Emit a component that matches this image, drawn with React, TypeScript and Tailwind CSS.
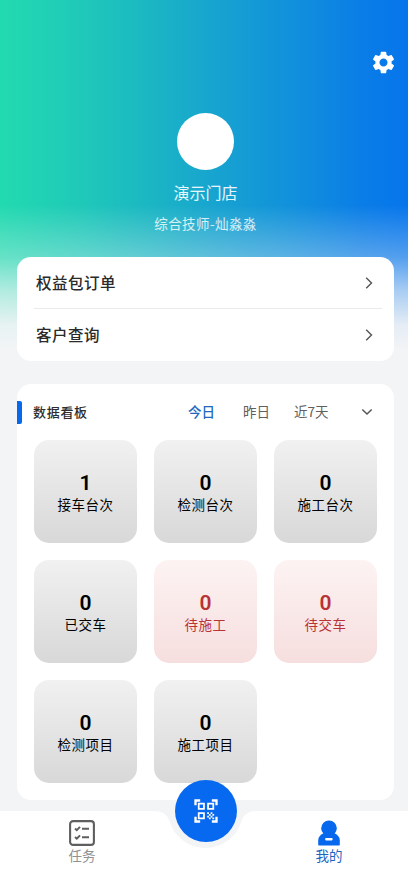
import { MdSettings, MdQrCodeScanner } from 'react-icons/md';

const menu = ['权益包订单', '客户查询'];

const stats = [
  { label: '接车台次', value: 1 },
  { label: '检测台次', value: 0 },
  { label: '施工台次', value: 0 },
  { label: '已交车', value: 0 },
  { label: '待施工', value: 0, warn: true },
  { label: '待交车', value: 0, warn: true },
  { label: '检测项目', value: 0 },
  { label: '施工项目', value: 0 },
];

function ChevronRight() {
  return (
    <svg width="8" height="12" viewBox="0 0 8 12" fill="none" stroke="#555" strokeWidth="1.4">
      <path d="M1.2 0.8 6.5 6 1.2 11.2" />
    </svg>
  );
}

function TaskIcon() {
  return (
    <svg width="26" height="26" viewBox="0 0 26 26" fill="none" stroke="#5f5f5f">
      <rect x="1.1" y="1.1" width="23.8" height="23.8" rx="3" strokeWidth="2.1" />
      <path d="M6 8.5l1.8 1.7 3.2-3.3M6 17l1.8 1.7 3.2-3.3M13 8.7h7M13 17.3h7" strokeWidth="2" />
    </svg>
  );
}

function UserIcon() {
  return (
    <svg width="22" height="26" viewBox="0 0 22 26" fill="#0768ed">
      <circle cx="11" cy="8.3" r="7.8" />
      <path d="M5.5 13.2h11c3.200 1.500 5.300 3.800 5.300 7.200v4.100c0 .7-.4 1-1 1H1.200c-.6 0-1-.3-1-1v-4.100c0-3.400 2.100-5.700 5.300-7.200z" />
      <rect x="7.2" y="18" width="7.4" height="2.4" rx="0.8" fill="#fff" />
    </svg>
  );
}

export default function App() {
  return (
    <div className="relative flex h-[883px] w-[408px] flex-col overflow-hidden bg-[#f3f4f6] font-['Noto_Sans_CJK_SC',sans-serif]">
      <div className="absolute inset-x-0 top-0 h-[360px] bg-[linear-gradient(90deg,#22dab0_0%,#1fc9b9_20%,#1bb7c3_36%,#17a3d0_53%,#1190dc_72%,#0a7de7_89%,#0675ec_100%)]">
        <div className="h-full bg-[linear-gradient(180deg,rgba(243,244,246,0)_205px,rgba(243,244,246,0.32)_257px,rgba(243,244,246,0.68)_290px,rgba(243,244,246,0.94)_325px,#f3f4f6_350px)]" />
      </div>

      <header className="relative flex h-[257px] flex-col items-center pl-[3px] text-white">
        <div className="mt-[49px] flex w-full justify-end pr-[11px]">
          <MdSettings size={27} />
        </div>
        <div className="mt-[37px] size-[57px] shrink-0 rounded-full bg-white" />
        <div className="mt-[11px] text-[16px] leading-[22px] text-white/90">演示门店</div>
        <div className="mt-[10px] text-[13.5px] leading-[20px] tracking-[0.4px] text-white/80">综合技师-灿淼淼</div>
      </header>

      <section className="relative ml-[17px] flex h-[104px] w-[377px] shrink-0 flex-col rounded-[14px] bg-white pl-[17px] pr-[12px]">
        {menu.map((item, i) => (
          <div
            key={item}
            className={`flex h-[52px] items-center justify-between pl-[2px] pr-[9px] ${i === 0 ? 'border-b border-[#ebebeb]' : ''}`}
          >
            <span className="text-[15.5px] font-medium tracking-[0.5px] text-[#2a2a2a]">{item}</span>
            <ChevronRight />
          </div>
        ))}
      </section>

      <section className="relative ml-[17px] mt-[23px] h-[416px] w-[377px] shrink-0 rounded-[14px] bg-white">
        <div className="flex h-[56px] items-center text-[13.5px]">
          <span className="h-[23px] w-[5px] rounded-r-[2px] bg-[#0768ed]" />
          <span className="ml-[11px] w-[155px] text-[13px] font-medium tracking-[0.7px] text-[#2d2d2d]">数据看板</span>
          <span className="mb-[2px] w-[55px] font-medium text-[#2468bd]">今日</span>
          <span className="mb-[2px] w-[51px] text-[#606060]">昨日</span>
          <span className="mb-[2px] w-[67px] text-[#606060]">近7天</span>
          <svg width="12" height="8" viewBox="0 0 12 8" fill="none" stroke="#555" strokeWidth="1.5">
            <path d="M1.3 1.5 6 6 10.7 1.5" />
          </svg>
        </div>
        <div className="grid grid-cols-[repeat(3,103px)] gap-[17px] pl-[17px]">
          {stats.map((s) => (
            <div
              key={s.label}
              className={`flex h-[103px] flex-col items-center rounded-[15px] bg-linear-to-b pt-[31px] ${
                s.warn ? 'from-[#fdf3f3] to-[#f6dede] text-[#b93236]' : 'from-[#f1f1f1] to-[#d8d8d8] text-black'
              }`}
            >
              <span className="font-[Roboto,sans-serif] text-[21px] font-semibold leading-[24px]">{s.value}</span>
              <span className="-mt-px text-[13.5px] leading-[20px] tracking-[0.5px]">{s.label}</span>
            </div>
          ))}
        </div>
      </section>

      <nav className="relative mt-[11px] flex h-[72px] shrink-0 justify-between pl-[62px] pr-[59px]">
        <svg className="absolute left-0 top-0" width="408" height="72" viewBox="0 0 408 72">
          <path
            fill="#fff"
            d="M0 0H154C163 0 167.5 4 169.5 10A37.5 37.5 0 0 0 241.5 10C243.5 4 248 0 257 0H408V72H0z"
          />
        </svg>
        <div className="relative flex w-[40px] flex-col items-center pt-[9px] text-[#929292]">
          <TaskIcon />
          <span className="-mt-px text-[13.5px] leading-[20px]">任务</span>
        </div>
        <div className="relative flex w-[40px] flex-col items-center pt-[9px] text-[#1c64bf]">
          <UserIcon />
          <span className="-mt-px text-[13.5px] leading-[20px]">我的</span>
        </div>
        <button className="absolute left-[174.5px] top-[-31px] flex size-[62px] items-center justify-center rounded-full bg-[#0768f0] text-white">
          <MdQrCodeScanner size={28} />
        </button>
      </nav>
    </div>
  );
}
